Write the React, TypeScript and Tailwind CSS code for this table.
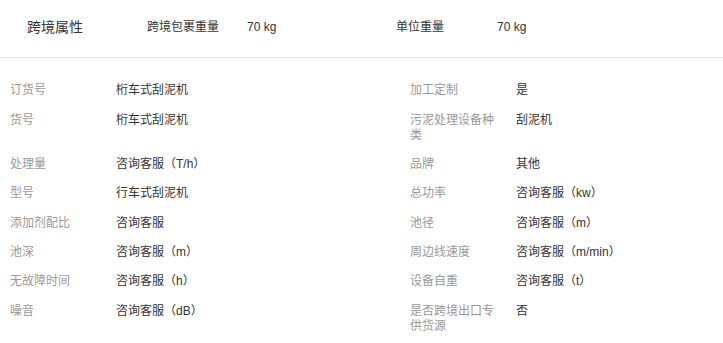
import React from "react";

const rows: [string, string, string, string][] = [
  ["订货号", "桁车式刮泥机", "加工定制", "是"],
  ["货号", "桁车式刮泥机", "污泥处理设备种类", "刮泥机"],
  ["处理量", "咨询客服（T/h）", "品牌", "其他"],
  ["型号", "行车式刮泥机", "总功率", "咨询客服（kw）"],
  ["添加剂配比", "咨询客服", "池径", "咨询客服（m）"],
  ["池深", "咨询客服（m）", "周边线速度", "咨询客服（m/min）"],
  ["无故障时间", "咨询客服（h）", "设备自重", "咨询客服（t）"],
  ["噪音", "咨询客服（dB）", "是否跨境出口专供货源", "否"],
];

function Cell({ label, value, className }: { label: string; value: string; className?: string }) {
  return (
    <div className={"flex " + (className ?? "")}>
      <div className="w-[90px] mr-[16px] shrink-0 text-[#999999] break-all">{label}</div>
      <div className="flex-1 text-[#333333]">{value}</div>
    </div>
  );
}

export default function App() {
  return (
    <div
      className="w-[723px] h-[343px] bg-white overflow-hidden text-[12px] leading-[15px]"
      style={{ fontFamily: '"Liberation Sans", "Noto Sans CJK SC", sans-serif' }}
    >
      <div className="h-[58px] flex items-center pb-[2px] border-b border-[#e8e8e8]">
        <div className="w-[147px] pl-[27px] text-[14px] text-[#333333]">跨境属性</div>
        <div className="w-[249px] flex text-[#333333]">
          <div className="w-[100px]">跨境包裹重量</div>
          <div>70 kg</div>
        </div>
        <div className="flex text-[#333333]">
          <div className="w-[101px]">单位重量</div>
          <div>70 kg</div>
        </div>
      </div>
      <div className="pt-[18px] pl-[10px]">
        {rows.map((r, i) => (
          <div key={i} className="flex py-[7.2px]">
            <Cell label={r[0]} value={r[1]} className="w-[400px]" />
            <Cell label={r[2]} value={r[3]} className="flex-1" />
          </div>
        ))}
      </div>
    </div>
  );
}
